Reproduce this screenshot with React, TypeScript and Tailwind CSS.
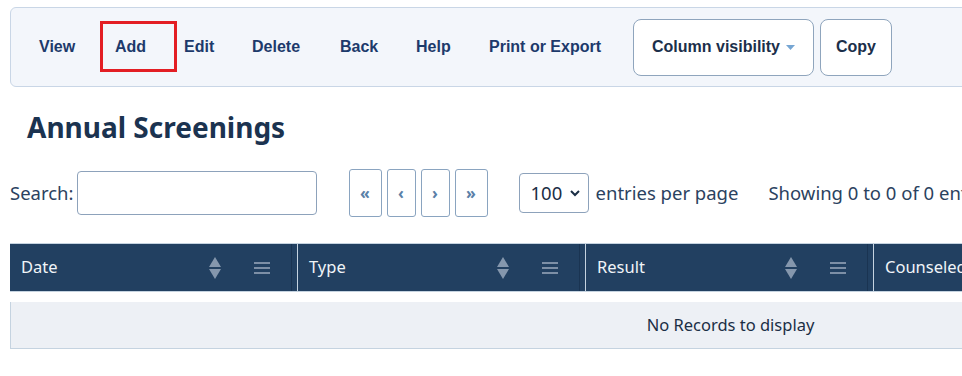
const links = [
  { t: 'View', w: 'w-[76px]' },
  { t: 'Add', w: 'w-[69px]' },
  { t: 'Edit', w: 'w-[68px]' },
  { t: 'Delete', w: 'w-[88px]' },
  { t: 'Back', w: 'w-[76px]' },
  { t: 'Help', w: 'w-[73px]' },
  { t: 'Print or Export', w: 'w-[134px]' },
]
const columns = ['Date', 'Type', 'Result', 'Counseled', 'Notes']

const SortIcon = () => (
  <svg width="12" height="22" viewBox="0 0 12 22" className="shrink-0">
    <path d="M6 0 L12 10 L0 10 Z" fill="#8597ad" />
    <path d="M0 12 L12 12 L6 22 Z" fill="#8597ad" />
  </svg>
)

const MenuIcon = () => (
  <svg width="16" height="14" viewBox="0 0 16 14" className="shrink-0">
    <rect x="0" y="1" width="16" height="2" fill="#7d8fa6" />
    <rect x="0" y="6" width="16" height="2" fill="#7d8fa6" />
    <rect x="0" y="11" width="16" height="2" fill="#7d8fa6" />
  </svg>
)

const pageBtn = 'flex h-[48px] shrink-0 items-center justify-center rounded-[3px] border border-[#8aa4c0] text-[16px] font-bold'

const App = () => {
  return (
    <div className="h-[376px] w-[962px] overflow-hidden bg-white pl-[10px] pt-[7px] font-['Noto_Sans',sans-serif]">
      {/* toolbar */}
      <div className="relative flex h-[80px] w-[1000px] items-center rounded-l-md border border-[#c9d6e6] bg-[#f3f6fb] pl-[28px] font-['Liberation_Sans',Arial,sans-serif] text-[16px] font-bold">
        {links.map((l) => (
          <span key={l.t} className={`${l.w} shrink-0 whitespace-nowrap text-[#1d3a6b]`}>
            {l.t}
          </span>
        ))}
        <div className="ml-[10px] flex h-[57px] w-[181px] shrink-0 items-center justify-center gap-[6px] rounded-lg border border-[#8fa5bd] bg-white text-[#1b2f4a]">
          Column visibility
          <svg width="9" height="5" viewBox="0 0 9 5">
            <path d="M0 0 L9 0 L4.5 5 Z" fill="#76a6d3" />
          </svg>
        </div>
        <div className="ml-[6px] flex h-[57px] w-[72px] shrink-0 items-center justify-center rounded-lg border border-[#8fa5bd] bg-white text-[#1b2f4a]">
          Copy
        </div>
        <div className="absolute left-[89px] top-[13px] h-[51px] w-[77px] border-[3px] border-[#e31e24]" />
      </div>

      <h1 className="ml-[17px] mt-[22px] text-[28px] font-bold leading-[36px] text-[#1b3350]">
        Annual Screenings
      </h1>

      {/* controls */}
      <div className="mt-[24px] flex items-center text-[18.5px] text-[#2b4260]">
        <span className="shrink-0">Search:</span>
        <input className="ml-[3px] h-[44px] w-[240px] shrink-0 rounded border border-[#8da2bb] bg-white" />
        <div className="ml-[32px] flex shrink-0 gap-[5px] text-[#5a7fa8]">
          <span className={`${pageBtn} w-[33px]`}>«</span>
          <span className={`${pageBtn} w-[29px]`}>‹</span>
          <span className={`${pageBtn} w-[29px]`}>›</span>
          <span className={`${pageBtn} w-[33px]`}>»</span>
        </div>
        <div className="ml-[31px] flex h-[40px] w-[70px] shrink-0 items-center justify-between rounded border border-[#8da2bb] bg-white pl-[11px] pr-[8px] text-[#1b2e45]">
          <span>100</span>
          <svg width="10" height="7" viewBox="0 0 10 7">
            <path d="M1 1 L5 5 L9 1" fill="none" stroke="#1b2e45" strokeWidth="2" />
          </svg>
        </div>
        <span className="ml-[7px] shrink-0 whitespace-nowrap">entries per page</span>
        <span className="ml-[30px] shrink-0 whitespace-nowrap">Showing 0 to 0 of 0 entries</span>
      </div>

      {/* table */}
      <div className="mt-[26px] w-[1440px]">
        <div className="flex h-[49px] border-y border-[#c5d3e0] bg-[#224061] text-[16.5px] text-[#f0f4f8]">
          {columns.map((c) => (
            <div key={c} className="flex w-[288px] shrink-0 items-center border-r border-[#c5d3e0] pl-[11px]">
              <span className="flex-1 whitespace-nowrap">{c}</span>
              <SortIcon />
              <span className="ml-[33px]">
                <MenuIcon />
              </span>
              <span className="ml-[21px] h-full w-px bg-[#1a3452]" />
              <span className="w-[5px]" />
            </div>
          ))}
        </div>
        <div className="mt-[10px] flex h-[47px] items-center justify-center border-b border-l border-[#c5d3e0] bg-[#edf0f5] text-[16.5px] text-[#1b2e45]">
          No Records to display
        </div>
      </div>
    </div>
  )
}

export default App
